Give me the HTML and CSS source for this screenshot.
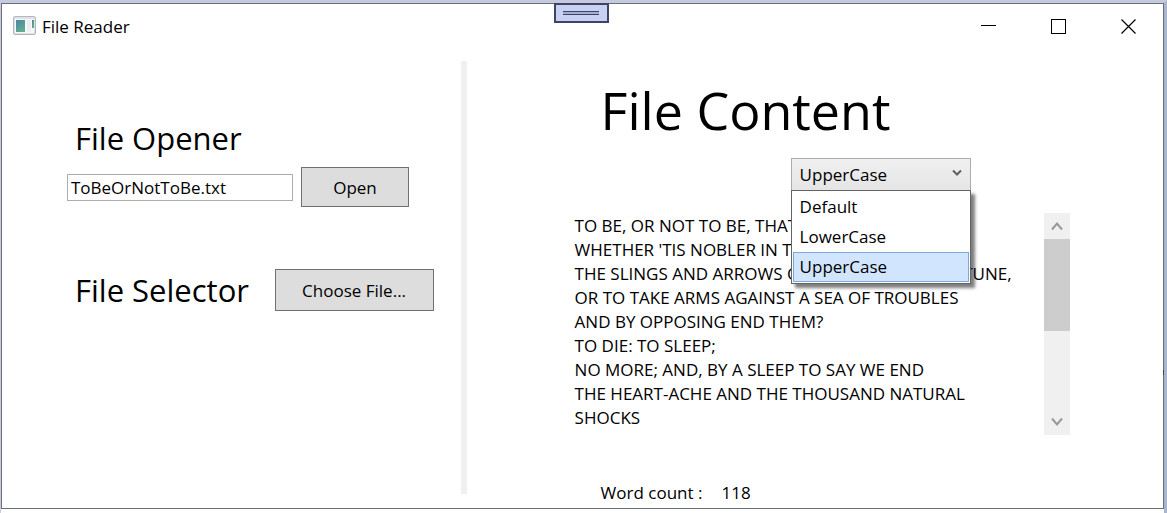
FILE: index.html
```html
<!DOCTYPE html>
<html lang="en">
<head>
<meta charset="utf-8">
<title>File Reader</title>
<link rel="stylesheet" href="styles.css">
</head>
<body>
<div class="window">
  <header class="titlebar">
    <svg class="app-icon" width="23" height="20" viewBox="0 0 23 20" aria-hidden="true">
      <defs><linearGradient id="pane" x1="0" y1="0" x2="0.6" y2="1"><stop offset="0" stop-color="#4c82aa"/><stop offset="1" stop-color="#5fb08a"/></linearGradient></defs>
      <rect x="0.5" y="0.5" width="22" height="18" rx="1.5" fill="#dfe2e5" stroke="#b4b8bd"/>
      <rect x="2" y="3" width="19" height="14" fill="#f7f8fa"/>
      <rect x="3" y="4" width="9" height="12" fill="url(#pane)"/>
      <rect x="14" y="4" width="4" height="12" fill="#eceef2"/>
      <rect x="19" y="4" width="2" height="8" fill="url(#pane)"/>
    </svg>
    <h1 class="caption">File Reader</h1>
    <div class="window-controls">
      <button class="control" aria-label="Minimize"><svg width="15" height="15" viewBox="0 0 15 15"><path d="M0 6.5h15" stroke="#000"/></svg></button>
      <button class="control" aria-label="Maximize"><svg width="15" height="15" viewBox="0 0 15 15"><rect x="0.5" y="0.5" width="14" height="14" fill="none" stroke="#000"/></svg></button>
      <button class="control" aria-label="Close"><svg width="15" height="15" viewBox="0 0 15 15"><path d="M0.5 0.5l14 14M14.5 0.5l-14 14" stroke="#000" stroke-width="1.2"/></svg></button>
    </div>
    <button class="debug-tab" aria-label="Toolbar"><span class="debug-grip"></span></button>
  </header>
  <main class="content">
    <section class="left">
      <h2 class="heading"><label for="path">File Opener</label></h2>
      <div class="opener-row">
        <input class="path" id="path" type="text" value="ToBeOrNotToBe.txt">
        <button class="button open">Open</button>
      </div>
      <div class="selector-row">
        <h2 class="heading">File Selector</h2>
        <button class="button choose">Choose File...</button>
      </div>
    </section>
    <div class="splitter"></div>
    <section class="right">
      <h2 class="title">File Content</h2>
      <div class="combo">
        <select class="combo-box" aria-label="Letter case">
          <option>Default</option>
          <option>LowerCase</option>
          <option selected>UpperCase</option>
        </select>
        <svg class="combo-arrow" width="10" height="8" viewBox="0 0 10 8"><path d="M1 1.5l4 4 4-4" fill="none" stroke="#606060" stroke-width="2"/></svg>
        <ul class="menu" role="listbox" aria-label="Letter case">
          <li class="item" role="option">Default</li>
          <li class="item" role="option">LowerCase</li>
          <li class="item selected" role="option" aria-selected="true">UpperCase</li>
        </ul>
      </div>
      <div class="viewer">
        <p class="text">TO BE, OR NOT TO BE, THAT IS THE QUESTION:<br>WHETHER 'TIS NOBLER IN THE MIND TO SUFFER<br>THE SLINGS AND ARROWS OF OUTRAGEOUS FORTUNE,<br>OR TO TAKE ARMS AGAINST A SEA OF TROUBLES<br>AND BY OPPOSING END THEM?<br>TO DIE: TO SLEEP;<br>NO MORE; AND, BY A SLEEP TO SAY WE END<br>THE HEART-ACHE AND THE THOUSAND NATURAL<br>SHOCKS</p>
        <div class="scrollbar">
          <button class="scroll-button" aria-label="Scroll up"><svg width="12" height="10" viewBox="0 0 12 10"><path d="M1 8.5l5-6 5 6" fill="none" stroke="#999" stroke-width="2"/></svg></button>
          <div class="track"><div class="thumb"></div></div>
          <button class="scroll-button" aria-label="Scroll down"><svg width="12" height="10" viewBox="0 0 12 10"><path d="M1 1.5l5 6 5-6" fill="none" stroke="#999" stroke-width="2"/></svg></button>
        </div>
      </div>
      <p class="count"><span>Word count :</span><span>118</span></p>
    </section>
  </main>
  <span class="marker"></span>
</div>
</body>
</html>
```

FILE: styles.css
```css
* { box-sizing: border-box; }

body {
  margin: 0;
  min-height: 100vh;
  border: solid;
  border-width: 3px 3px 0 1px;
  border-color: #c5cbdc #aab5ce #fff #c9cddd;
  background: #fff;
  color: #000;
  font: 17px/24px "Open Sans", "Noto Sans", sans-serif;
}

h1, h2, p, ul { margin: 0; padding: 0; font-weight: 400; }

button, input, select { font: inherit; color: inherit; padding: 0; border-radius: 0; }

.window {
  position: relative;
  border: 1px solid #696f7c;
}

.titlebar {
  position: relative;
  display: flex;
  align-items: center;
  height: 44px;
  padding-left: 11px;
}

.caption { margin-left: 6px; padding-top: 1px; font-size: 17px; }

.window-controls { display: flex; margin-left: auto; }

.control {
  display: grid;
  place-items: center;
  width: 70px;
  height: 44px;
  border: 0;
  background: none;
}

.debug-tab {
  position: absolute;
  top: -1px;
  left: 50%;
  display: grid;
  place-items: center;
  width: 55px;
  height: 20px;
  margin-left: -29px;
  border: 2px solid #3c4468;
  background: #c8d1f0;
}

.debug-grip {
  width: 36px;
  height: 4px;
  border: solid #3c4468;
  border-width: 1px 0;
  background: #a5aed0;
}

.content {
  display: grid;
  grid-template-columns: 459fr 6px 697fr;
  padding-top: 13px;
}

.left { padding: 54px 27px 0 65px; }

.heading { padding-left: 8px; font-size: 31px; line-height: 46px; }

.opener-row { display: flex; align-items: center; gap: 8px; margin-top: 6px; }

.path {
  width: 226px;
  height: 27px;
  padding: 1px 3px 0;
  border: 1px solid #abadb3;
  background: #fff;
}

.button { padding-top: 1px; border: 1px solid #707070; background: #ddd; }

.open { width: 108px; height: 40px; }

.selector-row { display: flex; align-items: center; justify-content: space-between; margin-top: 60px; }

.choose { width: 159px; height: 42px; }

.splitter { margin-bottom: 14px; background: #f0f0f0; }

.right { padding: 13px 93px 3px 108px; }

.title { padding-left: 26px; font-size: 52px; line-height: 72px; }

.combo { position: relative; width: 180px; margin: 12px 0 0 216px; }

.combo-box {
  display: block;
  appearance: none;
  width: 100%;
  height: 33px;
  padding-left: 8px;
  border: 1px solid #acacac;
  border-bottom-color: #707070;
  background: linear-gradient(#f0f0f0, #e5e5e5);
}

.combo-arrow { position: absolute; top: 11px; right: 9px; }

.menu {
  position: absolute;
  top: 32px;
  left: 0;
  z-index: 1;
  width: 100%;
  padding: 1px;
  list-style: none;
  border: 1px solid #646464;
  background: #fff;
  box-shadow: 4px 4px 3px rgba(0, 0, 0, 0.5);
}

.item {
  height: 30px;
  padding-left: 6px;
  border: 1px solid transparent;
  line-height: 28px;
}

.selected { border-color: #7da9d8; background: #d1e6fe; }

.viewer { display: flex; justify-content: space-between; height: 222px; margin-top: 22px; }

.text { padding-top: 1px; white-space: nowrap; }

.scrollbar { display: flex; flex-direction: column; width: 26px; background: #f0f0f0; }

.scroll-button {
  display: grid;
  place-items: center;
  height: 26px;
  border: 0;
  background: none;
}

.track { flex: 1; }

.thumb { height: 92px; background: #cdcdcd; }

.count { display: flex; gap: 19px; margin-top: 46px; padding-left: 26px; }

.marker {
  position: absolute;
  top: 366px;
  right: -5px;
  width: 5px;
  height: 5px;
  border: 1px solid #444;
  background: #fff;
}
```
